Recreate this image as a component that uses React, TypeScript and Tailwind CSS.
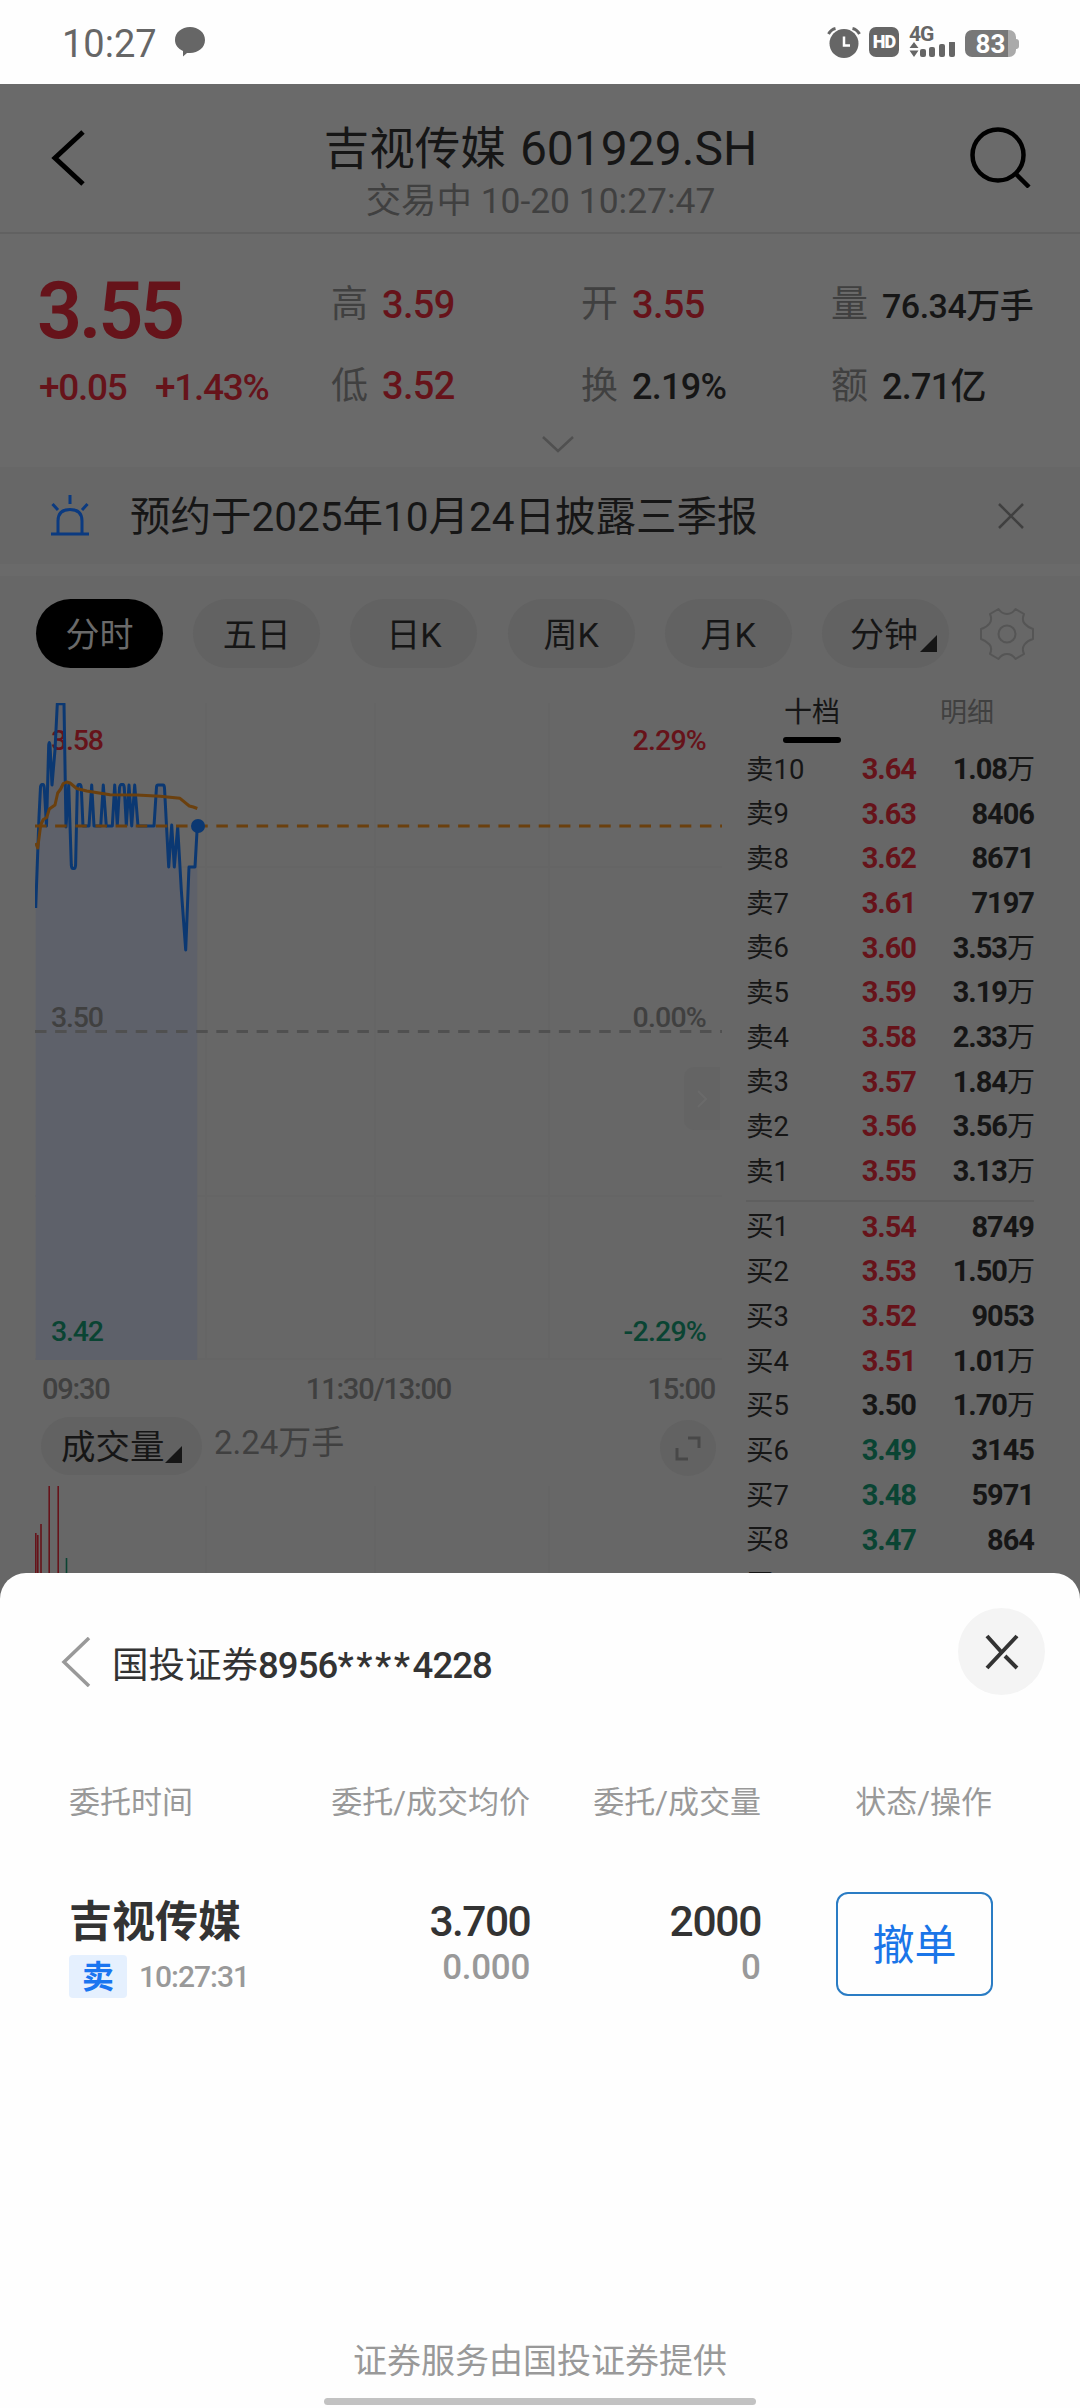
import type { ReactNode } from 'react';

type Level = { label: string; price: string; qty: string; unit?: string; color: string };

const RED = 'text-[#66131a]';
const GREEN = 'text-[#0a4433]';
const DARK = 'text-[#161616]';

const asks: Level[] = [
  { label: '卖10', price: '3.64', qty: '1.08', unit: '万', color: RED },
  { label: '卖9', price: '3.63', qty: '8406', color: RED },
  { label: '卖8', price: '3.62', qty: '8671', color: RED },
  { label: '卖7', price: '3.61', qty: '7197', color: RED },
  { label: '卖6', price: '3.60', qty: '3.53', unit: '万', color: RED },
  { label: '卖5', price: '3.59', qty: '3.19', unit: '万', color: RED },
  { label: '卖4', price: '3.58', qty: '2.33', unit: '万', color: RED },
  { label: '卖3', price: '3.57', qty: '1.84', unit: '万', color: RED },
  { label: '卖2', price: '3.56', qty: '3.56', unit: '万', color: RED },
  { label: '卖1', price: '3.55', qty: '3.13', unit: '万', color: RED },
];

const bids: Level[] = [
  { label: '买1', price: '3.54', qty: '8749', color: RED },
  { label: '买2', price: '3.53', qty: '1.50', unit: '万', color: RED },
  { label: '买3', price: '3.52', qty: '9053', color: RED },
  { label: '买4', price: '3.51', qty: '1.01', unit: '万', color: RED },
  { label: '买5', price: '3.50', qty: '1.70', unit: '万', color: DARK },
  { label: '买6', price: '3.49', qty: '3145', color: GREEN },
  { label: '买7', price: '3.48', qty: '5971', color: GREEN },
  { label: '买8', price: '3.47', qty: '864', color: GREEN },
  { label: '买9', price: '3.46', qty: '1197', color: GREEN },
];

const PRICE_LINE =
  'M.7 205L4 114L5.5 84Q6 81.5 7 81.5H8Q9 81.5 9.3 85L11.5 123L13.7 42Q14.3 37 15 42L17 82L20 47L22.3 .8H29L31 124L33.7 82L36.3 162Q36.6 165.5 38 165.5H39Q40.3 165.5 40.6 162L42.3 85Q42.6 81.5 44 81.5H45Q46 81.5 46.3 85L48 123H54L56.7 82L59 123H65.7L68.3 82L71.3 123H77.3L79.7 82L82.3 122L84.5 85Q85 81.5 86.5 81.5H88Q89 81.5 89.3 85L91.3 122L94 82L96.7 123L99.7 82L103 123H119L121.5 84Q121.8 82 123 82H128Q129.3 82 129.5 85L133.7 164L136.7 122L139.3 164L142.7 124L146.3 187L150.7 247L154 164H160L162.3 123';

const AVG_LINE =
  'M.7 140L2.7 145L5.7 122L8.3 116.5L11.7 114.5L14.3 106L20 102L22.7 90L25.7 86L28.3 80.5L31.7 79L35 80L41.7 85.5L51.7 88L75 91.7L101.7 92L125 93.3L145 95.3L154.3 103L158.3 104L162.3 105.5';

function StatusBar() {
  return (
    <div className="flex h-[84px] items-center justify-between bg-[#fefefe] pl-[62px] pr-[61px] text-[#666]">
      <div className="flex items-center">
        <span className="pt-1 text-[38px] leading-none">10:27</span>
        <svg className="ml-[18px]" width="30" height="30" viewBox="0 0 30 30" fill="currentColor">
          <path d="M15 0C23.300 0 30 5.500 30 13S23.300 26 15 26Q13 26 12 26L8 29.500V24C3 21.800 0 18 0 13C0 5.500 6.700 0 15 0Z" />
        </svg>
      </div>
      <div className="flex items-center">
        <svg width="34" height="31" viewBox="0 0 34 31">
          <circle cx="17" cy="16.500" r="14.500" fill="#666" />
          <path d="M1.500 7Q4 2.500 8.500 1.500M32.500 7Q30 2.500 25.500 1.500" fill="none" stroke="#666" strokeWidth="3" />
          <path d="M17 9.500V18.500H23" fill="none" stroke="#fff" strokeWidth="2.500" />
        </svg>
        <span className="ml-2 flex h-[30px] w-[30px] items-center justify-center rounded-[7px] bg-[#666] text-[18px] font-black leading-none tracking-[-1px] text-white">
          HD
        </span>
        <div className="ml-[10px] flex w-[46px] flex-col">
          <span className="h-[15px] text-[21px] font-bold leading-[15px] tracking-[-1px]">4G</span>
          <svg width="46" height="15" viewBox="0 0 46 15" fill="#666">
            <path d="M5 0L9.500 6H.5ZM5 15L9.500 8.500H.5Z" />
            <rect x="11" y="7" width="6" height="8" rx="2" />
            <rect x="20" y="5" width="6" height="10" rx="2" />
            <rect x="30" y="2" width="6" height="13" rx="2" />
            <rect x="40" y="-1" width="6" height="16" rx="2" />
          </svg>
        </div>
        <div className="ml-[10px] mt-[3px] flex items-center">
          <div className="flex h-[27px] w-[51px] items-center justify-center rounded-[7px] bg-[linear-gradient(90deg,#777_0_43px,#aaa_43px)] text-[26px] font-bold leading-none text-white">
            83
          </div>
          <div className="h-[10px] w-[3px] rounded-r bg-[#aaa]" />
        </div>
      </div>
    </div>
  );
}

function Header() {
  return (
    <div className="flex h-[150px] items-start justify-between border-b-2 border-[#616161] bg-[#6a6a6a] pl-[50px] pr-[49px]">
      <svg className="mt-[46px]" width="62" height="56" viewBox="0 0 62 56" fill="none" stroke="#000" strokeWidth="5">
        <path d="M33 2L5 28L33 54" />
      </svg>
      <div className="flex flex-col items-center pt-[37px]">
        <div className="flex h-[56px] items-center text-[#161616]">
          <span className="pt-0.5 text-[45.500px] leading-none">吉视传媒</span>
          <span className="ml-[14px] text-[48px] leading-none">601929.SH</span>
        </div>
        <div className="flex h-[50px] items-center text-[35.400px] leading-none text-[#404040]">交易中 10-20 10:27:47</div>
      </div>
      <svg className="mt-[42px]" width="62" height="62" viewBox="0 0 62 62" fill="none" stroke="#000" strokeWidth="4.500">
        <circle cx="29" cy="29" r="25.500" />
        <path d="M47 48L60 61" />
      </svg>
    </div>
  );
}

function Stat({ label, color, children }: { label: string; color: string; children: ReactNode }) {
  return (
    <div className="flex h-[80px] w-[250px] items-center whitespace-nowrap">
      <span className="w-[51px] pt-[3px] text-[37px] leading-none text-[#404040]">{label}</span>
      <span className={`pt-[3px] text-[38px] font-medium leading-none tracking-[-0.700px] ${color}`}>{children}</span>
    </div>
  );
}

function Quote() {
  return (
    <div className="flex h-[233px] flex-col bg-[#6a6a6a]">
      <div className="flex h-[192px] pt-[29px]">
        <div className="w-[331px] pl-[37px] text-[#66131a]">
          <div className="flex h-[96px] items-center text-[79px] font-semibold leading-none tracking-[-3.200px]">3.55</div>
          <div className="flex h-[56px] items-center text-[37px] font-medium leading-none tracking-[-1.300px]">
            <span className="w-[118px] pl-0.5">+0.05</span>
            <span>+1.43%</span>
          </div>
        </div>
        <div className="grid w-[749px] grid-cols-[250px_250px_249px]">
          <Stat label="高" color={RED}>3.59</Stat>
          <Stat label="开" color={RED}>3.55</Stat>
          <Stat label="量" color={DARK}>
            <span className="text-[34px] tracking-[-0.500px]">76.34万手</span>
          </Stat>
          <Stat label="低" color={RED}>3.52</Stat>
          <Stat label="换" color={DARK}>
            <span className="text-[36px]">2.19%</span>
          </Stat>
          <Stat label="额" color={DARK}>
            <span className="text-[36px]">2.71亿</span>
          </Stat>
        </div>
      </div>
      <svg className="ml-[542px] mt-[9px]" width="32" height="20" viewBox="0 0 32 20" fill="none" stroke="#505050" strokeWidth="2.500">
        <path d="M1 2L16 16L31 2" />
      </svg>
    </div>
  );
}

function Notice() {
  return (
    <div className="flex h-[97px] items-center bg-[#676767] pl-[51px] pr-[56px]">
      <svg width="38" height="42" viewBox="0 0 38 42" fill="none" stroke="#0b3a80" strokeWidth="3">
        <path d="M0 39H38M7 39V26Q7 14.500 19 14.500T31 26V39M19 0V9M1.500 9L7 15M36.500 9L31 15" />
      </svg>
      <span className="ml-[41px] pt-1 text-[40.500px] leading-none text-[#161616]">预约于2025年10月24日披露三季报</span>
      <svg className="ml-auto" width="26" height="26" viewBox="0 0 26 26" fill="none" stroke="#404040" strokeWidth="2.500">
        <path d="M1 1L25 25M25 1L1 25" />
      </svg>
    </div>
  );
}

function Tabs() {
  const tabs = ['分时', '五日', '日K', '周K', '月K'];
  return (
    <div className="flex h-[115px] items-center gap-[30.200px] pl-[36px] text-[34px] leading-none">
      {tabs.map((tab, i) => (
        <div
          key={tab}
          className={
            i === 0
              ? 'flex h-[69px] w-[127px] items-center justify-center rounded-full bg-black pt-0.5 text-[#6a6a6a]'
              : 'flex h-[69px] w-[127px] items-center justify-center rounded-full bg-[#626262] pt-0.5 text-[#161616]'
          }
        >
          {tab}
        </div>
      ))}
      <div className="flex h-[69px] w-[127px] items-center rounded-full bg-[#626262] pl-[28px] pt-0.5 text-[#161616]">
        分钟
        <svg className="ml-0.5 mt-[17px]" width="17" height="17" viewBox="0 0 17 17" fill="#161616">
          <path d="M17 0V17H0Z" />
        </svg>
      </div>
      <svg width="56" height="54" viewBox="-28 -27 56 54" fill="none" stroke="#555" strokeWidth="2">
        <circle r="8.500" />
        <path d="M-8.500 -25Q-5 -20 0 -20T8.500 -25L17 -20Q14.500 -14 17.500 -10.500T26 -5V5Q20.500 6.500 17.500 10.500T17 20L8.500 25Q5 20 0 20T-8.500 25L-17 20Q-14.500 14 -17.500 10.500T-26 5V-5Q-20.500 -6.500 -17.500 -10.500T-17 -20Z" strokeLinejoin="round" />
      </svg>
    </div>
  );
}

function Chart() {
  return (
    <div className="relative mt-[12px] h-[657px] w-[687px] text-[28.500px] font-medium leading-none">
      <svg width="687" height="657" viewBox="0 0 687 657" fill="none">
        <path d="M171 0V657M340 0V657M514 0V657M0 164H687M0 493H687M0 656H687" stroke="#656565" strokeWidth="2" />
        <path d={`${PRICE_LINE}V657H.7Z`} fill="#5e616a" />
        <path d="M0 328.500H687" stroke="#505050" strokeWidth="3" strokeDasharray="11.500 8.650" />
      </svg>
      <div className="absolute inset-0 flex flex-col px-4">
        <div className={`mt-[24px] flex justify-between ${RED}`}>
          <span className="tracking-[-1.200px]">3.58</span>
          <span className="tracking-[-0.800px]">2.29%</span>
        </div>
        <div className="mt-[248px] flex justify-between text-[#404040]">
          <span className="tracking-[-1.200px]">3.50</span>
          <span className="tracking-[-0.800px]">0.00%</span>
        </div>
        <div className={`mt-[286px] flex justify-between ${GREEN}`}>
          <span className="tracking-[-1.200px]">3.42</span>
          <span className="tracking-[-0.800px]">-2.29%</span>
        </div>
      </div>
      <svg className="absolute inset-0" width="687" height="657" viewBox="0 0 687 657" fill="none">
        <path d={PRICE_LINE} stroke="#0b3872" strokeWidth="3" strokeLinejoin="round" />
        <path d="M0 123H687" stroke="#6b400e" strokeWidth="3" strokeDasharray="11.500 8.650" />
        <path d={AVG_LINE} stroke="#6b400e" strokeWidth="3" strokeLinejoin="round" />
        <circle cx="163" cy="123" r="7" fill="#0b3872" />
      </svg>
      {/* collapse handle on the right edge */}
      <div className="absolute right-[2px] top-[364px] flex h-[63px] w-[36px] items-center justify-center rounded-l-[10px] bg-[#646464]">
        <svg width="10" height="18" viewBox="0 0 10 18" fill="none" stroke="#6a6a6a" strokeWidth="2">
          <path d="M1 1L9 9L1 17" />
        </svg>
      </div>
    </div>
  );
}

function Volume() {
  return (
    <div className="w-[687px]">
      <div className="flex h-[59px] items-center justify-between px-[7px] text-[29px] font-medium leading-none tracking-[-1.200px] text-[#404040]">
        <span>09:30</span>
        <span>11:30/13:00</span>
        <span>15:00</span>
      </div>
      <div className="-mt-0.5 flex h-[58px] items-center pl-[6px] pr-[6px] leading-none">
        <div className="flex h-[58px] w-[161px] items-center rounded-full bg-[#626262] pl-[20px] pt-0.5 text-[34.500px] text-[#161616]">
          成交量
          <svg className="mt-[14px]" width="17" height="17" viewBox="0 0 17 17" fill="#161616">
            <path d="M17 0V17H0Z" />
          </svg>
        </div>
        <span className="mb-2 ml-[12px] text-[33px] text-[#404040]">2.24万手</span>
        <div className="ml-auto mt-1 flex h-[56px] w-[56px] items-center justify-center rounded-full bg-[#626262]">
          <svg width="26" height="26" viewBox="0 0 26 26" fill="none" stroke="#484848" strokeWidth="3">
            <path d="M13 3H24V13M2 13V24H13" />
          </svg>
        </div>
      </div>
      <svg className="mt-[11px]" width="687" height="100" viewBox="0 0 687 100" fill="none" strokeWidth="1.600">
        <path d="M171 0V100M340 0V100M514 0V100" stroke="#656565" strokeWidth="2" />
        <path d="M.8 47V100M2.800 49V100M6 38V100M14.200 0V100M23.200 0V100" stroke="#66131a" />
        <path d="M31.500 72V100" stroke="#0a4433" />
      </svg>
    </div>
  );
}

function BookRow({ level }: { level: Level }) {
  return (
    <div className="flex h-[44.700px] items-center text-[29px] leading-none">
      <span className="w-[90px] text-[27.500px] text-[#161616]">{level.label}</span>
      <span className={`w-[80px] text-right font-bold tracking-[-1px] ${level.color}`}>{level.price}</span>
      <span className="ml-auto font-bold tracking-[-1px] text-[#161616]">
        {level.qty}
        {level.unit && <span className="text-[28px] font-normal">{level.unit}</span>}
      </span>
    </div>
  );
}

function OrderBook() {
  return (
    <div className="w-[288px]">
      <div className="flex h-[56px] pl-[37px] text-[28px] leading-none">
        <div className="flex w-[58px] flex-col items-center">
          <span className="mt-[8px] text-[#161616]">十档</span>
          <span className="mt-[10px] h-[6px] w-[58px] rounded-full bg-black" />
        </div>
        <span className="ml-[99px] mt-[9px] text-[27px] text-[#404040]">明细</span>
      </div>
      <div className="flex flex-col">
        {asks.map((level) => (
          <BookRow key={level.label} level={level} />
        ))}
      </div>
      <div className="mb-[3px] mt-[6px] h-[2px] bg-[#5f5f5f]" />
      <div className="flex flex-col">
        {bids.map((level) => (
          <BookRow key={level.label} level={level} />
        ))}
      </div>
    </div>
  );
}

function OrderSheet() {
  return (
    <div className="absolute inset-x-0 bottom-0 flex h-[835px] flex-col rounded-t-[26px] bg-[#fefefe] text-[#333]">
      <div className="flex h-[190px] items-start pl-[61px] pr-[35px]">
        <svg className="mt-[64px]" width="30" height="50" viewBox="0 0 30 50" fill="none" stroke="#999" strokeWidth="3.500">
          <path d="M28 1L3 25L28 49" />
        </svg>
        <div className="ml-[21px] mt-[73px] flex h-[40px] items-center text-[36.500px] font-medium leading-none">
          <span className="font-normal">国投证券</span>
          <span className="tracking-[-0.900px]">8956</span>
          <span className="tracking-[2.600px]">****</span>
          <span className="tracking-[-0.900px]">4228</span>
        </div>
        <div className="ml-auto mt-[35px] flex h-[87px] w-[87px] items-center justify-center rounded-full bg-[#f4f4f4]">
          <svg width="34" height="36" viewBox="0 0 34 36" fill="none" stroke="#333" strokeWidth="4">
            <path d="M2 2L15.500 17M32 2L2 34M20 22L32 34" />
          </svg>
        </div>
      </div>

      <div className="grid grid-cols-[200px_261px_231px_231px] px-[69px] pt-0.5 text-[31px] leading-[76px] text-[#999]">
        <span>委托时间</span>
        <span className="text-right">委托/成交均价</span>
        <span className="text-right">委托/成交量</span>
        <span className="text-right">状态/操作</span>
      </div>

      <div className="mt-[51px] grid grid-cols-[200px_261px_231px_232px] px-[69px] leading-none">
        <div className="flex flex-col">
          <span className="mt-[8px] whitespace-nowrap text-[43px] font-bold leading-[44px]">吉视传媒</span>
          <div className="mt-[11px] flex items-center">
            <span className="flex h-[43px] w-[58px] items-center justify-center rounded-[4px] bg-[#e5f0fe] text-[32px] font-bold text-[#1a75f0]">
              卖
            </span>
            <span className="ml-[12px] text-[30px] font-medium tracking-[-1px] text-[#999]">10:27:31</span>
          </div>
        </div>
        <div className="flex flex-col items-end">
          <span className="mt-[8px] text-[42.500px] font-medium leading-[44px] tracking-[-1.600px]">3.700</span>
          <span className="mt-[5px] text-[35px] font-medium leading-[38px] tracking-[-0.300px] text-[#999]">0.000</span>
        </div>
        <div className="flex flex-col items-end">
          <span className="mt-[8px] text-[42.500px] font-medium leading-[44px] tracking-[-1.300px]">2000</span>
          <span className="mt-[5px] text-[35px] font-medium leading-[38px] text-[#999]">0</span>
        </div>
        <div className="flex justify-end">
          <button className="h-[104px] w-[157px] rounded-[12px] border-2 border-[#2a7cc4] pt-1 text-[42px] text-[#1a75e8]">撤单</button>
        </div>
      </div>

      <div className="mt-auto flex flex-col items-center">
        <span className="text-[34px] leading-[46px] text-[#999]">证券服务由国投证券提供</span>
        <div className="mb-[3px] mt-[14px] h-[7px] w-[432px] rounded-full bg-[#c2c2c2]" />
      </div>
    </div>
  );
}

export default function App() {
  return (
    <div className="relative h-[2408px] w-[1080px] overflow-hidden bg-[#676767] font-[Roboto,'Noto_Sans_CJK_SC',sans-serif]">
      <StatusBar />
      <Header />
      <Quote />
      <Notice />
      <div className="h-[12px] bg-[#6a6a6a]" />
      <Tabs />
      <div className="flex pl-[35px]">
        <div className="w-[711px]">
          <Chart />
          <Volume />
        </div>
        <OrderBook />
      </div>
      <OrderSheet />
    </div>
  );
}
